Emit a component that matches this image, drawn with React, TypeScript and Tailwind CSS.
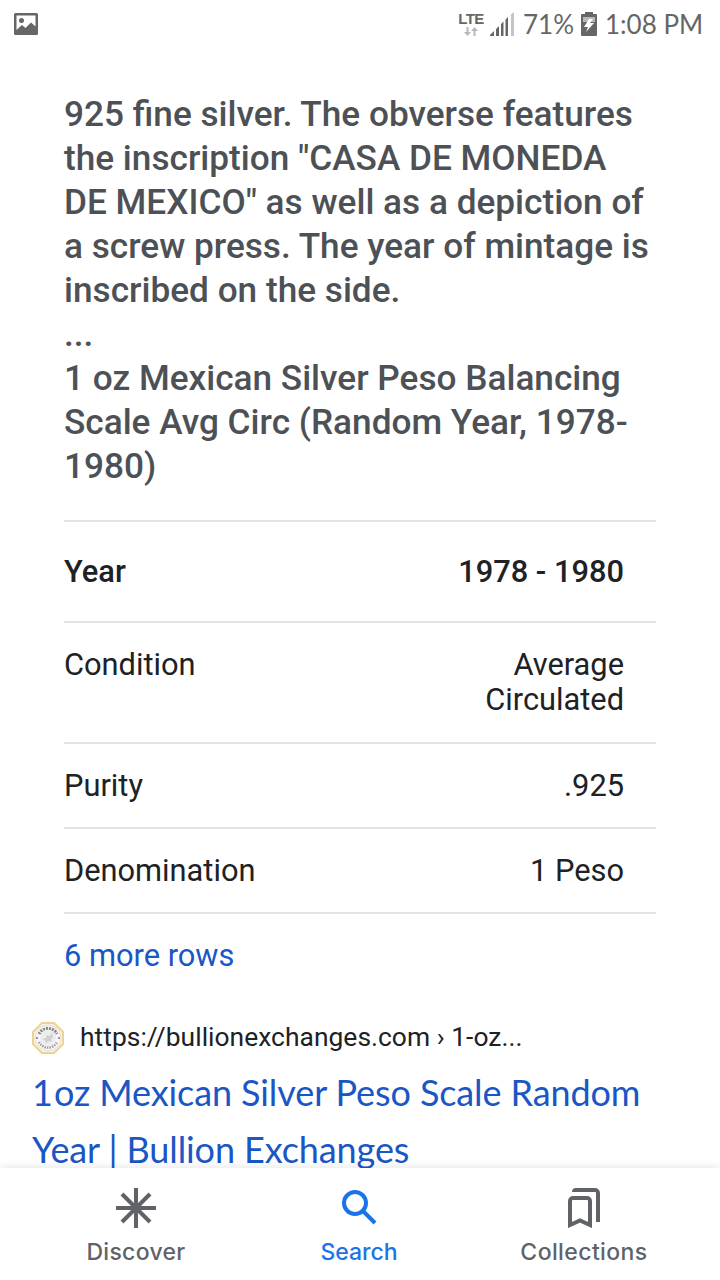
const rows = [
  { label: "Condition", value: "Average Circulated", space: "pb-[25px]" },
  { label: "Purity", value: ".925", space: "pb-6" },
  { label: "Denomination", value: "1 Peso", space: "pb-6" },
];

function StatusBar() {
  return (
    <header className="flex h-12 shrink-0 items-center justify-between pr-4 pl-[14px] text-[#666666]">
      <svg width="24" height="22" viewBox="0 0 24 22" fill="currentColor">
        <path
          fillRule="evenodd"
          d="M1.500 0h21A1.500 1.500 0 0 1 24 1.500v19a1.500 1.500 0 0 1-1.500 1.500h-21A1.500 1.500 0 0 1 0 20.500v-19A1.500 1.500 0 0 1 1.500 0ZM2.500 2.500V17L8 12l3.500 3 5.500-5.500 4.500 4v-11Z"
        />
        <circle cx="7.500" cy="7.500" r="2.500" />
      </svg>
      <div className="flex items-center">
        <div className="flex w-[26px] flex-col items-center">
          <span className="font-['Liberation_Sans'] text-[15px] leading-[14px] font-bold tracking-[-0.500px]">LTE</span>
          <svg width="14" height="9" viewBox="0 0 14 9" fill="#b8b8b8" className="mt-px">
            <path d="M2.500 0h2v5H7L3.500 9 0 5h2.500ZM9.500 9h2V4H14l-3.500-4L7 4h2.500Z" />
          </svg>
        </div>
        <svg width="25" height="24" viewBox="0 0 25 24" fill="currentColor" className="ml-[6px]">
          <path d="M0 24v-1l4-4v5ZM6 24v-7l3-3v10ZM11 24V12l2.500-2.500V24ZM15.500 24V7.500L18 5v19Z" />
          <path fill="#c4c4c4" d="M21 24V2.500L24 0v24Z" />
        </svg>
        <span className="ml-2 w-[50px] font-[Lato] text-[26px] leading-8 whitespace-nowrap">71%</span>
        <svg width="16" height="24" viewBox="0 0 16 24" fill="currentColor" className="ml-[8px]">
          <path d="M4 0h8v2h3a1 1 0 0 1 1 1v20a1 1 0 0 1-1 1H1a1 1 0 0 1-1-1V3a1 1 0 0 1 1-1h3Z" />
          <path fill="#b8b8b8" d="M2 5h12v5H2Z" />
          <path fill="#fff" d="m8 7-5 8h4l-2 5 8-9H9l3-4Z" />
        </svg>
        <span className="ml-[8px] w-[99px] font-[Lato] text-[26px] leading-8 whitespace-nowrap">1:08 PM</span>
      </div>
    </header>
  );
}

function Favicon() {
  return (
    <svg width="32" height="32" viewBox="0 0 32 32" fill="none">
      <path d="M10 1h12l9 9v12l-9 9H10l-9-9V10Z" fill="#fbf5e5" stroke="#edd294" strokeWidth="2" strokeLinejoin="round" />
      <circle cx="16" cy="16" r="13" fill="#f7f7f7" stroke="#e6e0d2" />
      <path d="M7 12a10 10 0 0 1 18 0" stroke="#858585" strokeWidth="3" strokeDasharray="2 1" />
      <path d="M7 20a10 10 0 0 0 18 0" stroke="#a0a0a0" strokeWidth="2.500" strokeDasharray="1.500 1" />
      <circle cx="5" cy="16" r="1" fill="#777" />
      <circle cx="27" cy="16" r="1" fill="#777" />
      <circle cx="16" cy="16" r="8" fill="#ededed" />
      <path d="M10 17l4-1 1-3 3 1 2-4 1 5-2 2 1 3-3-1-3 2-1-3Z" fill="#cfcfcf" />
    </svg>
  );
}

function BottomNav() {
  return (
    <nav className="z-10 grid h-28 shrink-0 grid-cols-[272px_174px_1fr] bg-white font-[Inter] text-[23px] leading-7 font-medium text-[#5f6368] shadow-[0_-1px_8px_rgba(0,0,0,0.1)]">
      <div className="flex flex-col items-center pt-5">
        <svg width="40" height="40" viewBox="0 0 40 40" stroke="currentColor" strokeWidth="4">
          <path d="M20 0v40M0 20h40M6 6l28 28M34 6 6 34" />
        </svg>
        <span className="mt-[10px] tracking-[0.300px]">Discover</span>
      </div>
      <div className="flex flex-col items-center pt-5 text-[#1a73e8]">
        <svg width="40" height="40" viewBox="0 0 40 40" fill="none" stroke="currentColor" strokeWidth="4">
          <circle cx="16" cy="15" r="11" />
          <path d="m23.500 22.500 12.500 12.500" />
        </svg>
        <span className="mt-[10px]">Search</span>
      </div>
      <div className="flex flex-col items-center pt-5 pl-[2px]">
        <svg width="32" height="40" viewBox="0 0 32 40" fill="none" stroke="currentColor" strokeWidth="4">
          <path d="M2 37V13a3 3 0 0 1 3-3h14a3 3 0 0 1 3 3v24l-10-4.500Z" />
          <path d="M6 4a2 2 0 0 1 2-2h19a3 3 0 0 1 3 3v29" />
        </svg>
        <span className="mt-[10px] tracking-[0.400px]">Collections</span>
      </div>
    </nav>
  );
}

export default function App() {
  return (
    <div className="flex h-[1280px] w-[720px] flex-col overflow-hidden bg-white font-[Roboto] text-[#202124]">
      <StatusBar />
      <main className="h-[1120px] shrink-0 overflow-hidden pt-11">
        <section className="px-16">
          <div className="text-[35.200px] leading-[44px] font-medium whitespace-nowrap text-[#4d5156]">
            <p>
              925 fine silver. The obverse features
              <br />
              the inscription "CASA DE MONEDA
              <br />
              DE MEXICO" as well as a depiction of
              <br />
              a screw press. The year of mintage is
              <br />
              inscribed on the side.
            </p>
            <p>...</p>
            <p>
              1 oz Mexican Silver Peso Balancing
              <br />
              Scale Avg Circ (Random Year, 1978-
              <br />
              1980)
            </p>
          </div>

          <div className="mt-8 border-t-2 border-[#e3e3e3] text-[30.800px] leading-[35px]">
            <div className="flex h-[101px] items-center justify-between border-b-2 border-[#e3e3e3] pr-8 font-medium">
              <span>Year</span>
              <span>1978 - 1980</span>
            </div>
            {rows.map((row) => (
              <div key={row.label} className={`flex justify-between border-b-2 border-[#e3e3e3] pt-6 pr-8 ${row.space}`}>
                <span>{row.label}</span>
                <span className="max-w-[160px] text-right">{row.value}</span>
              </div>
            ))}
          </div>
          <a className="mt-6 block text-[30.800px] leading-9 text-[#1a56c4]">6 more rows</a>
        </section>

        <section className="mt-12 px-8">
          <div className="flex items-center gap-4">
            <Favicon />
            <span className="pb-0.5 text-[26.400px] leading-[30px] tracking-[0.030px]">https://bullionexchanges.com › 1-oz...</span>
          </div>
          <h3 className="mt-[10px] font-[Lato] text-[36px] leading-[57px] tracking-[-0.100px] whitespace-nowrap text-[#1a56c4]">
            <span className="tracking-[-8px]">1</span> oz Mexican Silver Peso Scale Random
            <br />
            Year | Bullion Exchanges
          </h3>
        </section>
      </main>
      <BottomNav />
    </div>
  );
}
